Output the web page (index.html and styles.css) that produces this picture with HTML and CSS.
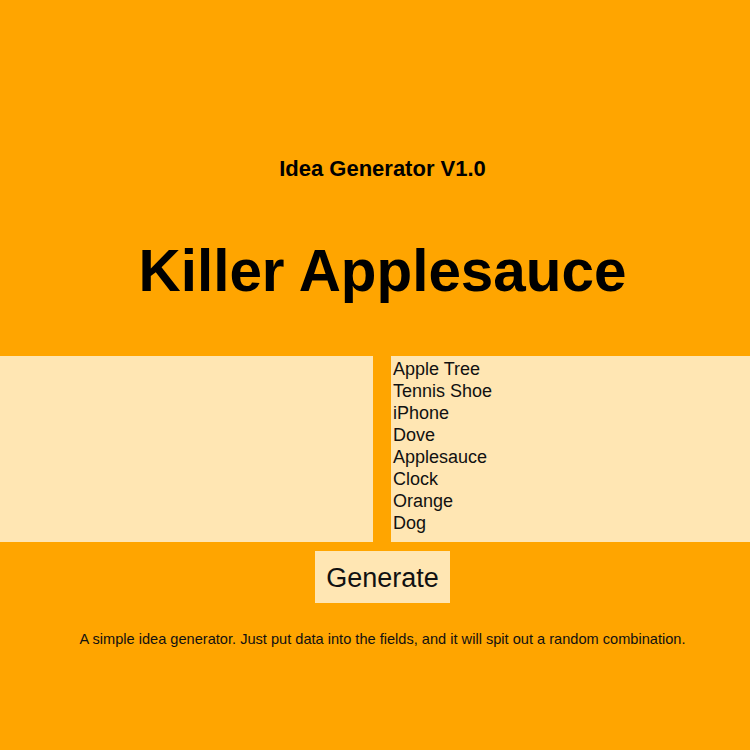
FILE: index.html
```html
<!DOCTYPE html>
<html>
<head>
<meta charset="utf-8">
<link rel="stylesheet" href="styles.css">
</head>
<body>
<div class="page">
  <h2 class="subtitle">Idea Generator V1.0</h2>
  <h1 class="result">Killer Applesauce</h1>
  <div class="fields">
    <textarea class="field"></textarea>
    <textarea class="field">Apple Tree
Tennis Shoe
iPhone
Dove
Applesauce
Clock
Orange
Dog</textarea>
  </div>
  <div class="actions">
    <button class="generate">Generate</button>
  </div>
  <p class="note">A simple idea generator. Just put data into the fields, and it will spit out a random combination.</p>
</div>
</body>
</html>
```
FILE: styles.css
```css
html, body {
  margin: 0;
  padding: 0;
  background: #ffa500;
  font-family: "Liberation Sans", Arial, sans-serif;
  color: #000;
  overflow: hidden;
}
.page {
  width: 765px;
  height: 750px;
  display: flex;
  flex-direction: column;
}
.subtitle {
  margin: 155px 0 0;
  font-size: 22px;
  line-height: 28px;
  text-align: center;
  font-weight: bold;
}
.result {
  margin: 51px 0 0;
  font-size: 58.4px;
  line-height: 74px;
  text-align: center;
  font-weight: bold;
}
.fields {
  margin-top: 48px;
  display: grid;
  grid-template-columns: 373px 1fr;
  column-gap: 18px;
  height: 186px;
}
.field {
  display: block;
  background: #ffe6b3;
  border: none;
  margin: 0;
  padding: 2px 2px 0;
  height: 186px;
  width: 100%;
  box-sizing: border-box;
  resize: none;
  font-family: "Liberation Sans", Arial, sans-serif;
  font-size: 18px;
  line-height: 22px;
  color: #111;
  outline: none;
  overflow: hidden;
}
.actions {
  display: flex;
  justify-content: center;
  margin-top: 9px;
}
.generate {
  background: #ffe6b3;
  border: none;
  height: 52px;
  padding: 2px 11px 0;
  font-family: "Liberation Sans", Arial, sans-serif;
  font-size: 27px;
  color: #111;
}
.note {
  margin: 27px 0 0;
  font-size: 14.6px;
  line-height: 18px;
  text-align: center;
  color: #111;
}
```
